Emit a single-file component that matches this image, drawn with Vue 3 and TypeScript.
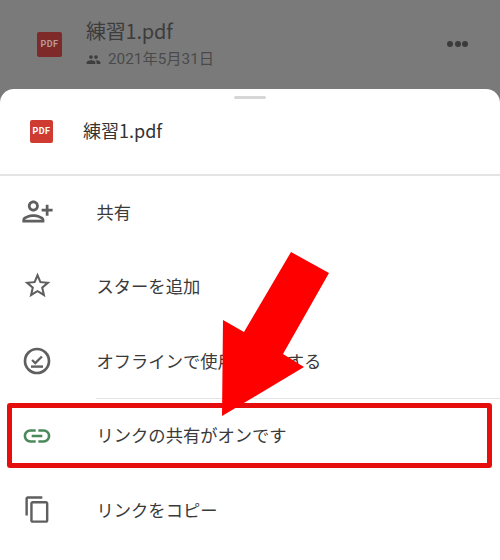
<script setup lang="ts">
interface Row {
  label: string
  kind: string
}
const rows: Row[] = [
  { label: '共有', kind: 'share' },
  { label: 'スターを追加', kind: 'star' },
  { label: 'オフラインで使用可能にする', kind: 'offline' },
  { label: 'リンクの共有がオンです', kind: 'link' },
  { label: 'リンクをコピー', kind: 'copy' }
]
</script>

<template>
  <div class="page">
    <header class="backdrop">
      <div class="pdf pdf-back">PDF</div>
      <div class="back-info">
        <div class="back-title">練習1.pdf</div>
        <div class="back-meta">
          <svg class="group" viewBox="0 0 24 24"><path d="M16 11c1.66 0 2.99-1.34 2.99-3S17.66 5 16 5c-1.66 0-3 1.34-3 3s1.34 3 3 3zm-8 0c1.66 0 2.99-1.34 2.99-3S9.66 5 8 5C6.34 5 5 6.34 5 8s1.34 3 3 3zm0 2c-2.33 0-7 1.17-7 3.5V19h14v-2.5c0-2.33-4.67-3.5-7-3.5zm8 0c-.29 0-.62.02-.97.05 1.16.84 1.97 1.97 1.97 3.45V19h6v-2.5c0-2.33-4.67-3.5-7-3.5z" /></svg>
          <span>2021年5月31日</span>
        </div>
      </div>
      <div class="dots"><i></i><i></i><i></i></div>
    </header>

    <section class="sheet">
      <div class="handle"></div>
      <div class="sheet-head">
        <div class="pdf pdf-front">PDF</div>
        <div class="sheet-title">練習1.pdf</div>
      </div>
      <div
        v-for="row in rows"
        :key="row.kind"
        class="row"
        :class="`row-${row.kind}`"
      >
        <div class="icon-cell">
          <svg v-if="row.kind === 'share'" class="ic ic-share" viewBox="0 0 24 24"><path transform="matrix(-1 0 0 1 24 0)" d="M15 12c2.21 0 4-1.79 4-4s-1.79-4-4-4-4 1.79-4 4 1.79 4 4 4zm0-6c1.1 0 2 .9 2 2s-.9 2-2 2-2-.9-2-2 .9-2 2-2zm0 8c-2.67 0-8 1.34-8 4v2h16v-2c0-2.66-5.33-4-8-4zm-6 4c.22-.72 3.31-2 6-2 2.7 0 5.8 1.29 6 2H9zm-3-3v-3h3v-2H6V7H4v3H1v2h3v3h2z" /></svg>
          <svg v-else-if="row.kind === 'star'" class="ic ic-star" viewBox="0 0 24 24"><path d="M22 9.24l-7.19-.62L12 2 9.19 8.63 2 9.24l5.46 4.73L5.82 21 12 17.27 18.18 21l-1.63-7.03L22 9.24zM12 15.4l-3.76 2.27 1-4.28-3.32-2.88 4.38-.38L12 6.1l1.71 4.04 4.38.38-3.32 2.88 1 4.28L12 15.4z" /></svg>
          <svg v-else-if="row.kind === 'offline'" class="ic ic-offline" viewBox="0 0 24 24">
            <circle cx="12" cy="12" r="9" fill="none" stroke="currentColor" stroke-width="2" />
            <path d="M8.3 11.2l2.4 2.4 5-5" fill="none" stroke="currentColor" stroke-width="1.7" />
            <path d="M7.5 16.2h9" fill="none" stroke="currentColor" stroke-width="1.8" />
          </svg>
          <svg v-else-if="row.kind === 'link'" class="ic ic-link" viewBox="0 0 24 24"><path d="M3.9 12c0-1.71 1.39-3.1 3.1-3.1h4V7H7c-2.76 0-5 2.24-5 5s2.24 5 5 5h4v-1.9H7c-1.71 0-3.1-1.39-3.1-3.1zM8 13h8v-2H8v2zm9-6h-4v1.9h4c1.71 0 3.1 1.39 3.1 3.1s-1.39 3.1-3.1 3.1h-4V17h4c2.76 0 5-2.24 5-5s-2.24-5-5-5z" /></svg>
          <svg v-else class="ic ic-copy" viewBox="0 0 24 24"><path d="M16 1H4c-1.1 0-2 .9-2 2v14h2V3h12V1zm3 4H8c-1.1 0-2 .9-2 2v14c0 1.1.9 2 2 2h11c1.1 0 2-.9 2-2V7c0-1.1-.9-2-2-2zm0 16H8V7h11v14z" /></svg>
        </div>
        <div class="label">{{ row.label }}</div>
      </div>
    </section>

    <div class="highlight"></div>
    <svg class="arrow" viewBox="0 0 500 560">
      <polygon points="291,252 329,273 283,354 304,367 222,416 223,320 244,332" />
    </svg>
  </div>
</template>

<style>
html, body { margin: 0; background: #fff; }
</style>

<style scoped>
.page {
  position: relative;
  width: 500px;
  height: 560px;
  overflow: hidden;
  background: #7a7a7a;
  font-family: "Liberation Sans", "Noto Sans CJK JP", sans-serif;
}
.backdrop {
  height: 89px;
  display: flex;
  align-items: center;
  box-sizing: border-box;
  padding: 0 32px 0 37px;
}
.pdf {
  display: flex;
  align-items: center;
  justify-content: center;
  border-radius: 2px;
  font-family: "Roboto", "Liberation Sans", sans-serif;
  font-weight: 700;
  flex: none;
  letter-spacing: 0.5px;
}
.pdf-back {
  width: 25px;
  height: 25px;
  margin-top: -1px;
  background: #7d2a28;
  color: #b89a98;
  font-size: 9px;
}
.back-info {
  margin-left: 24px;
  flex: 1;
}
.back-title {
  font-size: 20px;
  line-height: 26px;
  margin-top: -2px;
  color: #3c3c3c;
  font-family: "Noto Sans CJK JP", sans-serif;
  letter-spacing: -0.2px;
}
.back-meta {
  display: flex;
  align-items: center;
  gap: 7px;
  margin-top: 5px;
  font-size: 15.3px;
  line-height: 20px;
  color: #4a4a4a;
  font-family: "Roboto", "Noto Sans CJK JP", sans-serif;
}
.group {
  width: 15px;
  height: 15px;
  fill: #3e3e3e;
}
.dots {
  display: flex;
  gap: 1.5px;
  margin-top: -1px;
}
.dots i {
  width: 6px;
  height: 6px;
  border-radius: 50%;
  background: #3b3b3b;
}
.sheet {
  position: relative;
  height: 471px;
  background: #fff;
  border-radius: 14px 14px 0 0;
}
.handle {
  position: absolute;
  left: 234px;
  top: 7px;
  width: 32px;
  height: 2.5px;
  border-radius: 2px;
  background: #d6d6d6;
}
.sheet-head {
  height: 85px;
  border-bottom: 2px solid #e4e4e4;
  display: flex;
  align-items: center;
  padding-left: 30px;
}
.pdf-front {
  width: 23px;
  height: 23px;
  margin-top: -1px;
  background: #cf3b30;
  color: #fff;
  font-size: 9px;
}
.sheet-title {
  margin-left: 30px;
  padding-bottom: 4px;
  font-size: 18px;
  color: #333;
  font-family: "Noto Sans CJK JP", sans-serif;
}
.row {
  height: 74.4px;
  box-sizing: border-box;
  padding-bottom: 4px;
  display: flex;
  align-items: center;
  color: #3a3a3a;
}
.row-offline {
  height: 73px;
  padding-bottom: 2px;
  position: relative;
}
.row-offline::after {
  content: "";
  position: absolute;
  left: 96px;
  right: 0;
  bottom: -1px;
  height: 1px;
  background: #e4e4e4;
}
.row-link {
  height: 77px;
}
.icon-cell {
  width: 74px;
  margin-right: 22.5px;
  display: flex;
  justify-content: center;
  flex: none;
}
.ic {
  fill: #5f5f5f;
  color: #5f5f5f;
}
.ic-share { width: 33px; height: 33px; }
.ic-star { width: 31px; height: 31px; }
.ic-offline { width: 32px; height: 32px; margin-top: 1px; }
.ic-link { width: 32px; height: 32px; fill: #4a8a5a; margin-top: 3px; }
.ic-copy { width: 29px; height: 29px; }
.label {
  font-size: 17.3px;
  white-space: nowrap;
  font-family: "Noto Sans CJK JP", sans-serif;
}
.highlight {
  position: absolute;
  left: 7px;
  top: 403px;
  width: 475px;
  height: 55px;
  border: 5px solid #e60d0d;
  border-radius: 3px;
}
.arrow {
  position: absolute;
  inset: 0;
  width: 500px;
  height: 560px;
  fill: #fe0000;
}
</style>
